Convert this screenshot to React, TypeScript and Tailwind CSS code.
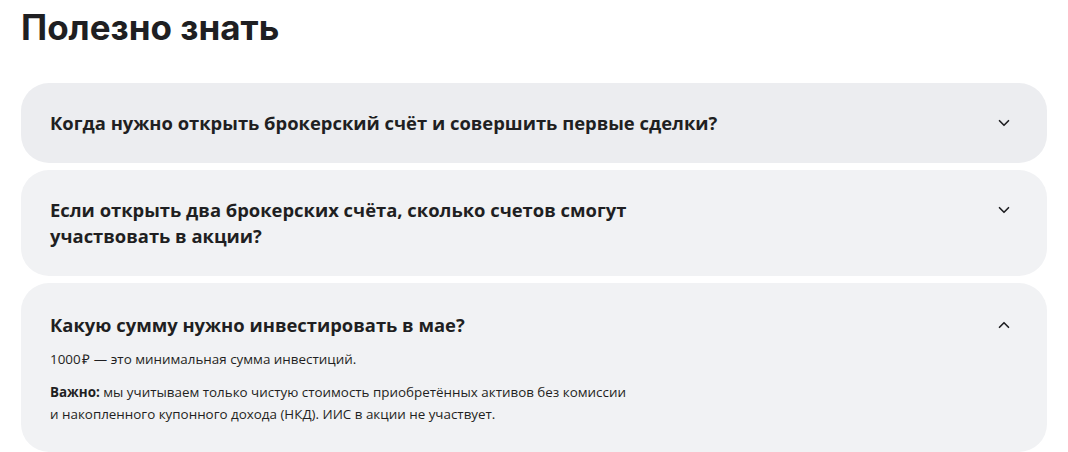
import React from "react";
import { ChevronDown, ChevronUp } from "lucide-react";

const faq = [
  {
    q: "Когда нужно открыть брокерский счёт и совершить первые сделки?",
    open: false,
    bg: "bg-[#ecedf0]",
    width: "max-w-none",
  },
  {
    q: "Если открыть два брокерских счёта, сколько счетов смогут участвовать в акции?",
    open: false,
    bg: "bg-[#f1f2f4]",
    width: "max-w-[620px]",
  },
  {
    q: "Какую сумму нужно инвестировать в мае?",
    open: true,
    bg: "bg-[#f1f2f4]",
    width: "max-w-none",
  },
];

const App = () => {
  return (
    <div className="w-[1068px] h-[452px] overflow-hidden bg-white pl-[21px] pr-[21px] font-['Open_Sans',sans-serif] text-[#1f1f22]">
      {/* --- Heading --- */}
      <h1 className="font-['Inter',sans-serif] font-bold text-[35px] leading-[42px] pt-[6px] mb-[35px]">
        Полезно знать
      </h1>

      {/* --- Accordion --- */}
      <div className="flex flex-col gap-[7px]">
        {faq.map((item) => (
          <div key={item.q} className={`rounded-[28px] ${item.bg} pl-[29px] pr-[33px]`}>
            <div className={`flex items-start justify-between ${item.open ? "pt-[29px]" : "py-[27px]"}`}>
              <h3 className={`${item.width} text-[18.4px] leading-[26px] font-bold`}>{item.q}</h3>
              <span className="mt-[4px] mr-[1px]">
                {item.open ? (
                  <ChevronUp className="w-[18px] h-[18px]" strokeWidth={2.2} />
                ) : (
                  <ChevronDown className="w-[18px] h-[18px]" strokeWidth={2.2} />
                )}
              </span>
            </div>
            {item.open && (
              <div className="text-[13.4px] leading-[22px] pt-[10px] pb-[27px]">
                <p>1000{"\u202F"}₽ — это минимальная сумма инвестиций.</p>
                <p className="mt-[11px]">
                  <b className="font-bold">Важно:</b> мы учитываем только чистую стоимость приобретённых активов без комиссии
                  <br />
                  и накопленного купонного дохода (НКД). ИИС в акции не участвует.
                </p>
              </div>
            )}
          </div>
        ))}
      </div>
    </div>
  );
};

export default App;
